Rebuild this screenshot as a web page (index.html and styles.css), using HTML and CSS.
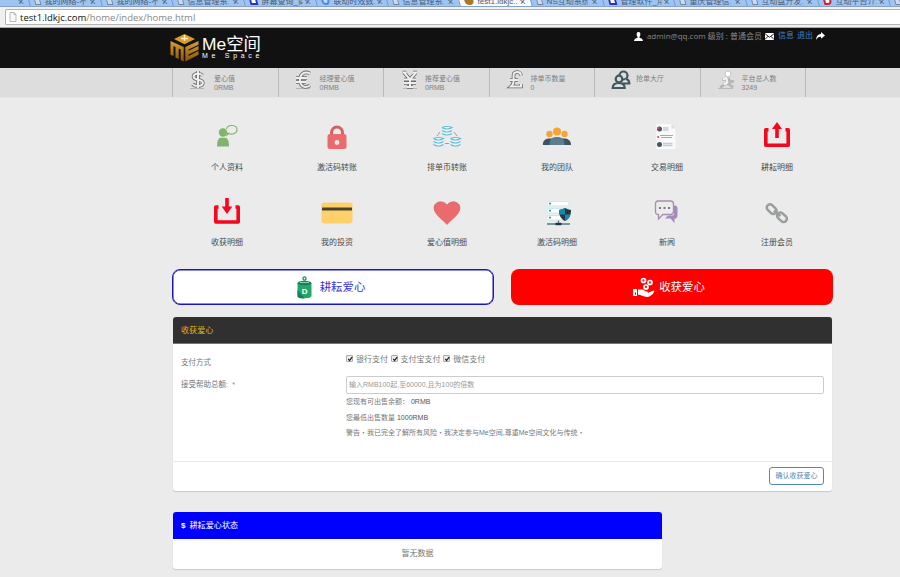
FILE: index.html
```html
<!DOCTYPE html>
<html lang="zh-CN">
<head>
<meta charset="utf-8">
<title>Me空间</title>
<link rel="stylesheet" href="styles.css">
</head>
<body>
<div class="tabs">
  <div class="tab first"><b>×</b></div>
  <div class="tab"><i></i><span>我的网络-不..</span><b>×</b></div>
  <div class="tab"><i></i><span>我的网络-不..</span><b>×</b></div>
  <div class="tab"><i></i><span>信息管理系..</span><b>×</b></div>
  <div class="tab"><i class="blue"></i><span>屏幕查询_商..</span><b>×</b></div>
  <div class="tab"><i class="ring"></i><span>联动时效数..</span><b>×</b></div>
  <div class="tab"><i></i><span>信息管理系..</span><b>×</b></div>
  <div class="tab active"><i class="gold"></i><span>test1.ldkjc..</span><b>×</b></div>
  <div class="tab"><i></i><span>NS互动系统..</span><b>×</b></div>
  <div class="tab"><i class="blue"></i><span>管理软件_用..</span><b>×</b></div>
  <div class="tab"><i></i><span>重庆管理信..</span><b>×</b></div>
  <div class="tab"><i></i><span>互动盘开发..</span><b>×</b></div>
  <div class="tab"><i class="red"></i><span>互动平台介..</span><b>×</b></div>
  <div class="tab"><i></i></div>
</div>
<div class="toolbar">
  <div class="address">
    <svg width="8" height="10" viewBox="0 0 8 10"><path d="M1 .5h4l2 2v7H1zM5 .5v2h2" fill="#f8f8f8" stroke="#aaa" stroke-width=".8"/></svg>
    <span class="url"><em>test1.ldkjc.com</em>/home/index/home.html</span>
  </div>
</div>
<header class="top">
  <div class="container top-in">
    <div class="logo">
      <svg width="29" height="28" viewBox="0 0 29 28">
        <defs><linearGradient id="g" x1="0" y1="0" x2="0" y2="1"><stop offset="0" stop-color="#d9a12c"/><stop offset="1" stop-color="#8a5207"/></linearGradient></defs>
        <path d="M14.500 0 25 5 14.500 10.200 4 5z" fill="#d99d2b"/><path d="M14.500 1v6M11 4.500h7" stroke="#fff3b5" stroke-width="1.400"/>
        <path d="M.5 7 13.700 13V27.500l-3-1.500V15.500l-2-1v10.500l-3.200-1.600V13l-2-.9v10L.5 20.800z" fill="url(#g)"/>
        <path d="M28.500 7v3.800l-10 4.800v1.200l10-4.800v3.800l-10 4.800v1.400l10-5v3.800L15.300 27.500V13z" fill="url(#g)"/>
      </svg>
      <div class="logo-text"><strong>Me空间</strong><small>Me Space</small></div>
    </div>
    <div class="account">
      <svg width="9" height="9" viewBox="0 0 9 9"><path d="M4.500 0C2.800 0 2.500 1.200 2.700 3c.1 1 .5 1.700.9 2v.8C1.500 6.500.3 7 0 9h9C8.700 7 7.500 6.500 5.400 5.800V5c.4-.3.800-1 .9-2C6.500 1.200 6.200 0 4.500 0z" fill="#fff"/></svg>
      <span class="who">admin@qq.com 级别 : 普通会员</span>
      <svg width="9" height="7" viewBox="0 0 9 7"><path d="M0 0h9v7H0z" fill="#fff"/><path d="m0 .7 4.500 3.600L9 .7M0 6.500l3-3.300M9 6.500 6 3.200" fill="none" stroke="#111" stroke-width=".9"/></svg>
      <a>信息</a><a>退出</a>
      <svg width="9" height="8" viewBox="0 0 9 8"><path d="M5 0l4 3.400-4 3.400V4.800C2.800 4.600 1.300 5.600.3 8 0 4.700 1.700 2.300 5 2z" fill="#fff"/></svg>
    </div>
  </div>
</header>
<div class="stats">
  <div class="container stats-in">
    <div class="stat"><svg width="20" height="20" viewBox="0 0 20 20"><path class="sh" d="M1 18.500h14"/><path class="o" d="M13.500 5.500C11 3 4.500 3 4.500 6.800c0 4 9.300 1.800 9.300 6 0 4-7.500 4-10.300 1.300M9 1v17"/><path class="w" d="M13.500 5.500C11 3 4.500 3 4.500 6.800c0 4 9.300 1.800 9.300 6 0 4-7.500 4-10.300 1.300M9 1v17"/></svg><p>爱心值<br>0RMB</p></div>
    <div class="stat"><svg width="20" height="20" viewBox="2 0 20 20"><path class="sh" d="M3 18.500h14"/><path class="o" d="M17 3.500C12 .8 7 3.500 7 10s5 8.500 10 5.500M3 8h11M3 12h10"/><path class="w" d="M17 3.500C12 .8 7 3.500 7 10s5 8.500 10 5.500M3 8h11M3 12h10"/></svg><p>经理爱心值<br>0RMB</p></div>
    <div class="stat"><svg width="20" height="20" viewBox="0 0 20 20"><path class="sh" d="M3 18.500h14"/><path class="o" d="M2.500 2.500h4M13 2.500h4M4.500 3 10 9.500 15.500 3M10 9v8M4 9.500h12M4 13h12M7 17h6"/><path class="w" d="M2.500 2.500h4M13 2.500h4M4.500 3 10 9.500 15.500 3M10 9v8M4 9.500h12M4 13h12M7 17h6"/></svg><p>推荐爱心值<br>0RMB</p></div>
    <div class="stat"><svg width="20" height="20" viewBox="0 0 20 20"><path class="o" d="M15 5.500C14.500 .7 7.500 1 7.500 6c0 4 1.500 7-2.500 10.500h10V14M4 10h8"/><path class="w" d="M15 5.500C14.500 .7 7.500 1 7.500 6c0 4 1.500 7-2.500 10.500h10V14M4 10h8"/></svg><p>排单币数量<br>0</p></div>
    <div class="stat"><svg width="20" height="20" viewBox="0 0 20 20" fill="#ddd" stroke="#3e5760" stroke-width="2.200"><circle cx="12.500" cy="5.500" r="4"/><path d="M11 13.500h7.300c0-2.500-1-4-3.300-4.500"/><circle cx="8" cy="9" r="3.300"/><path d="M1.700 18c0-3.500 2-5 6-5s6 1.500 6 5z"/></svg><p>抢单大厅</p></div>
    <div class="stat"><svg width="20" height="20" viewBox="0 0 20 20"><path d="M1 18.500h15" stroke="#bbb"/><circle cx="11" cy="4" r="3" fill="#fff" stroke="#c4c4c4"/><path d="M10 8.500 5.500 10M11 8l2.500 4 3.500-1M10 9v4l-3 2-4 2.500M10 13l3 2 3 2.500" fill="none" stroke="#b5b5b5" stroke-width="2.600"/><path d="m10 8-4 1.500M10 9v4l-3 1.500" fill="none" stroke="#fff" stroke-width="1.600"/></svg><p>平台总人数<br>3249</p></div>
  </div>
</div>
<main class="container">
  <nav class="menu">
    <a><svg width="30" height="30" viewBox="0 0 30 30"><g fill="#82b46e"><circle cx="11" cy="11.500" r="4.200"/><path d="M5 25.500c0-5 1-8.300 3.500-8.800h5C16 17.200 17 20.500 17 25.500z"/></g><path d="M14.500 8c1-5 10.500-4.500 10.500.5 0 4-5 5.500-8 4l-2 1.500.8-2.700" fill="none" stroke="#82b46e" stroke-width="1.100"/></svg>个人资料</a>
    <a><svg width="30" height="30" viewBox="0 0 30 30"><path d="M9.500 15v-3c0-8 11-8 11 0v3" fill="none" stroke="#d95e61" stroke-width="3"/><rect x="5.500" y="13" width="19" height="15" rx="2.500" fill="#eb6a6d"/><circle cx="15" cy="21.500" r="2.400" fill="#f5e8e8"/></svg>激活码转账</a>
    <a><svg width="30" height="30" viewBox="0 0 30 30"><g fill="#fff" stroke="#5bbdd8" stroke-width="1.200"><path d="M10 6.500q5-2 10 0-5 3-10 0M10 9.500q5 3 10 0M10 12.500q5 3 10 0M1.500 17.500q5-2 10 0-5 3-10 0M1.500 20.500q5 3 10 0M1.500 23.500q5 3 10 0M18.500 17.500q5-2 10 0-5 3-10 0M18.500 20.500q5 3 10 0M18.500 23.500q5 3 10 0"/></g><path d="m8 11-3 4M22 11l3 4M13 22.500h4" stroke="#789" stroke-width=".8"/></svg>排单币转账</a>
    <a><svg width="30" height="30" viewBox="0 0 30 30"><g fill="#f4a535"><circle cx="7.500" cy="13" r="3.200"/><circle cx="22.500" cy="13" r="3.200"/><path d="M.8 24c0-5 3-6.500 7-6.500h14c4 0 7.200 1.500 7.200 6.500z" fill="#3d5361"/><circle cx="15" cy="10.500" r="4"/></g><path d="M7.500 24c0-5.500 2-8 7.500-8s7.500 2.500 7.500 8z" fill="#5b7e8c"/></svg>我的团队</a>
    <a><svg width="30" height="30" viewBox="0 0 30 30"><path d="M4.500 3h15l4 4.500V28h-19z" fill="#fafafa"/><path d="m19.500 3 4 4.500h-4" fill="#ddd"/><path d="M11 7h5.500M11 9h5.500M11 22.500h9.500M11 24.500h9.500" stroke="#c7cace" stroke-width="1.500"/><path d="M8 14.500h13M9 16.500h11" stroke="#dc9294"/><circle cx="7.500" cy="8" r="2.500" fill="#475560"/><path d="M7.500 8V5.500A2.500 2.500 0 0 0 5 8z" fill="#db4b4f"/><circle cx="6.200" cy="16" r="1.100" fill="#db4b4f"/><circle cx="7.500" cy="23.500" r="2.500" fill="#475560"/></svg>交易明细</a>
    <a><svg width="30" height="30" viewBox="0 0 30 30" fill="none" stroke="#f6061f" stroke-width="3.600" stroke-linejoin="round"><path d="M6.500 8.800H3.800v15.500h22.400V8.800h-2.700"/><path d="M15 17V7"/><path d="m10 8 5-7 5 7z" fill="#f6061f" stroke="none"/></svg>耕耘明细</a>
    <a><svg width="30" height="30" viewBox="0 -1 30 30" fill="none" stroke="#f6061f" stroke-width="3.600" stroke-linejoin="round"><path d="M6.500 10H3.800v15h22.400V10h-2.700"/><path d="M15 1v10"/><path d="m9.700 9.500 5.300 7.500 5.300-7.500z" fill="#f6061f" stroke="none"/></svg>收获明细</a>
    <a><svg width="30" height="30" viewBox="0 -1 30 30"><rect x="-.5" y="5.500" width="31" height="21" rx="3" fill="#fed069"/><path d="M0 10.500h30v3H0z" fill="#4a4332"/></svg>我的投资</a>
    <a><svg width="30" height="30" viewBox="0 -1 30 30"><path d="M15 27.500C12 23.500 2 17.500 2 11 2 4.500 11 2.500 15 8 19 2.500 28 4.500 28 11 28 17.500 18 23.500 15 27.500z" fill="#eb6a6d" stroke="#d45e61" stroke-width=".6"/></svg>爱心值明细</a>
    <a><svg width="30" height="30" viewBox="0 -1 30 30"><g fill="#fff" stroke="#cce9f0"><rect x="5" y="4.500" width="22" height="4.500" rx="1.500"/><rect x="5" y="11.500" width="22" height="4.500" rx="1.500"/><rect x="5" y="18.500" width="22" height="4.500" rx="1.500"/></g><path d="M7 6.700h2M7 13.700h2M7 20.700h2" stroke="#289ab8" stroke-width="1.800"/><path d="M5 27h23M16.500 23.500v3" stroke="#54798a" stroke-width="1.300"/><path d="M13.500 27h6" stroke="#234" stroke-width="2.400"/><path d="M17 13q3.500-.3 6-2 2.500 1.700 6 2c.2 5-2 9-6 11-4-2-6.200-6-6-11z" fill="#273943"/><path d="M23 11v6.500h-5.500q-.7-2-.5-4.500 3.500-.3 6-2zM23 17.500h5.500c-.9 3-2.800 5.200-5.500 6.500z" fill="#168aae"/></svg>激活码明细</a>
    <a><svg width="30" height="30" viewBox="0 -1 30 30"><path d="M22 8.500c3 0 3.500 1 3.500 3.500v6c0 2.500-1 3.500-3 3.700V26L18.500 21.500H13l3-3h4.500c1.500 0 1.500-1 1.500-2z" fill="#a58aba"/><path d="M6 4h12.500c2 0 3 1 3 3v7.500c0 2-1 3-3 3H11L6.500 22v-4.500C4 17.500 3.500 16.500 3.500 14.500V7C3.500 5 4.500 4 6 4z" fill="#ececec" stroke="#a58fae" stroke-width="1.300"/><path d="M7 11h2M11.500 11h2M16 11h2" stroke="#86708f" stroke-width="2"/></svg>新闻</a>
    <a><svg width="30" height="30" viewBox="0 -2 30 30" fill="none" stroke="#9a9e9b" stroke-width="2.500"><rect x="4.500" y="8" width="11" height="6.500" rx="3.200" transform="rotate(43 10 10.700)"/><rect x="14.500" y="16" width="11" height="6.500" rx="3.200" transform="rotate(43 20 19.200)"/><path d="m12 12.500 6.500 5.500"/></svg>注册会员</a>
  </nav>
  <div class="actions">
    <a class="btn-sow"><svg width="15" height="23" viewBox="0 0 15 23"><circle cx="7.500" cy="2.500" r="1.600" fill="none" stroke="#1e8558" stroke-width="1.200"/><path d="M.5 7v13c0 3 14 3 14 0V7z" fill="#25a567"/><path d="M.5 14v6c0 3 7 2.500 7 2.300z" fill="#15834e"/><ellipse cx="7.500" cy="7" rx="7" ry="2.200" fill="#148254"/><path d="M3 6.500h9" stroke="#8fd3af"/><text x="7.600" y="18" text-anchor="middle">D</text></svg>耕耘爱心</a>
    <a class="btn-reap"><svg width="22" height="21" viewBox="0 0 22 21"><g fill="#d33" stroke="#fff" stroke-width="1.700"><circle cx="10.500" cy="3.500" r="2"/><circle cx="17" cy="5.500" r="2"/><circle cx="13" cy="10" r="2"/></g><path d="M0 12h4v7H0z" fill="#fff"/><path d="M2 15.500h1v2H2z" fill="#236"/><path d="M5 12.500h4c2 0 2.500 2 5 2 1 0 1.500.8.500 1.500 2 0 4-2.500 6.500-2.500 1.500.5-2.500 6.500-7 6.500-3.500 0-6-2.500-9-2.500z" fill="#fff"/></svg>收获爱心</a>
  </div>
  <section class="panel reap">
    <h2>收获爱心</h2>
    <div class="form">
      <label>支付方式</label>
      <div class="checks"><i><svg viewBox="0 0 7 7"><path d="m1.500 3.300 1.500 2 3-4"/></svg></i><span>银行支付</span><i><svg viewBox="0 0 7 7"><path d="m1.500 3.300 1.500 2 3-4"/></svg></i><span>支付宝支付</span><i><svg viewBox="0 0 7 7"><path d="m1.500 3.300 1.500 2 3-4"/></svg></i><span>微信支付</span></div>
      <label>接受帮助总额: &nbsp;<em>*</em></label>
      <div class="field"><div class="input">输入RMB100起,至60000,且为100的倍数</div>
        <p>您现有可出售余额： <b>0RMB</b></p><p>您最低出售数量 <b>1000RMB</b></p><p>警告・我已完全了解所有风险・我决定参与Me空间,尊重Me空间文化与传统・</p></div>
    </div>
    <footer><a>确认收获爱心</a></footer>
  </section>
  <section class="panel sow">
    <h2><b>$</b>耕耘爱心状态</h2>
    <div class="empty">暂无数据</div>
  </section>
</main>
</body>
</html>
```
FILE: styles.css
```css
* { box-sizing: border-box; }
body { margin: 0; height: 577px; overflow: hidden; background: #ebebeb; color: #777; font: 8px/12px "Liberation Sans", "Noto Sans CJK SC", sans-serif; }
h2, p { margin: 0; font-weight: normal; }
em { font-style: normal; }
svg { display: block; flex: none; overflow: visible; }
.container { width: 661px; margin-left: 172px; }

.tabs { display: flex; height: 7px; background: #9dc4f3; border-bottom: 1px solid #85a3c9; overflow: hidden; }
.tab { display: flex; flex: none; align-items: flex-end; width: 71.7px; height: 6px; padding: 0 5px 0 5px; border-left: 1px solid #769ac6; transform: skewX(15deg); color: #4a5a70; }
.tab.first { width: 29px; border: 0; }
.tab.active { background: #fafafa; }
.tab i { flex: none; width: 6px; height: 9px; margin: 0 4px 1px 0; border: 1px solid #75859b; background: #c8dcf5; }
.tab i.blue { width: 8px; background: #fff; border: 2px solid #2634c8; }
.tab i.ring { width: 8px; border: 2px solid #4a8de0; border-radius: 50%; }
.tab i.gold { width: 9px; border: 0; border-radius: 50%; background: #aa7529; }
.tab i.red { width: 8px; border: 2px solid #cf2436; border-radius: 0 5px 5px 0; background: #fff; }
.tab span { width: 41px; font-size: 8px; line-height: 9px; white-space: nowrap; overflow: hidden; flex: none; transform: skewX(-15deg); }
.tab b { margin-left: auto; font-size: 10px; line-height: 8px; font-weight: normal; }

.toolbar { height: 21px; padding: 2px 0 3px 5px; background: #f0f0f0; border-bottom: 1px solid #aaa; }
.address { display: flex; align-items: center; gap: 3px; height: 16px; padding-left: 3px; background: #fff; border: 1px solid #b3b3b3; border-right: 0; border-radius: 2px 0 0 2px; }
.url { font: 9.5px/14px "Open Sans", sans-serif; color: #888; padding-top: 1px; }
.url em { color: #111; }

.top { height: 40px; background: #111; }
.top-in { display: flex; justify-content: space-between; height: 40px; }
.logo { display: flex; gap: 3px; margin: 6px 0 0 -2px; }
.logo-text { display: flex; flex-direction: column; color: #fff; padding-top: 2px; }
.logo-text strong { font: 17.4px/17px "Liberation Sans", "Noto Sans CJK SC", sans-serif; white-space: nowrap; }
.logo-text small { font-size: 7px; line-height: 6px; letter-spacing: 3.7px; white-space: nowrap; }
.account { display: flex; align-items: center; height: 14px; margin: 1px 8px 0 0; gap: 3px; color: #888; }
.account .who { font: 8px/14px "Open Sans", "Noto Sans CJK SC", sans-serif; white-space: nowrap; margin-left: 1px; }
.account a { color: #3d83c9; line-height: 14px; }
.account a:first-of-type { margin-left: 1px; }

.stats { height: 30px; background: #ddd; border-bottom: 1px solid #e6e6e6; }
.stats-in { display: flex; }
.stat { display: flex; flex: none; gap: 5px; width: 105.5px; height: 29px; padding: 2px 0 0 16px; border-left: 1px solid #b9b9b9; white-space: nowrap; }
.stat:last-child { width: 106.500px; border-right: 1px solid #b9b9b9; }
.stat p { padding-top: 4px; font-size: 7px; line-height: 9px; color: #808080; }
.stat .o { fill: none; stroke: #6a6a6a; stroke-width: 3.6; }
.stat .w { fill: none; stroke: #eee; stroke-width: 2; }
.stat .sh { stroke: #b5b5b5; stroke-width: 1; }

.menu { display: grid; grid-template-columns: repeat(6, 110px); grid-auto-rows: 75px; height: 172px; padding-top: 23px; }
.menu a { display: flex; flex-direction: column; align-items: center; color: #4a4a4a; line-height: 12px; }
.menu svg { margin-bottom: 11px; }

.actions { display: flex; justify-content: space-between; margin-top: -1px; }
.actions a { display: flex; align-items: center; justify-content: center; width: 322px; height: 36px; padding-right: 4px; border-radius: 8px; font-size: 11.4px; }
.btn-sow { gap: 8px; background: #fff; border: 1px solid #1717c8; box-shadow: inset 0 0 0 .5px #1717c8; color: #3535dc; }
.btn-sow text { font: bold 8px "Liberation Sans", sans-serif; fill: #fff; }
.actions .btn-reap { gap: 4px; padding-right: 6px; background: #f00; color: #fff; }

.panel { background: #fff; border-radius: 3px; box-shadow: 0 1px 1px #c9c9c9; overflow: hidden; margin-left: 1px; }
.panel h2 { padding-left: 8px; font-size: 8.1px; line-height: 27px; }
.reap { height: 174px; width: 659px; margin-top: 12px; }
.reap h2 { height: 27px; background: #303030; color: #d8b90f; border-bottom: 1px solid #777; }
.form { display: grid; grid-template-columns: 165px 478px; grid-template-rows: 22px 84px; height: 117px; padding: 10px 8px 0; }
.form label { font-size: 7.5px; padding-top: 3px; }
.form label em { color: #c08030; }
.checks { display: flex; align-items: flex-start; }
.checks i { width: 7px; height: 7px; margin: 1px 3px 0 0; border: 1px solid #aaa; border-radius: 1px; background: #eee; }
.checks svg { width: 6px; height: 6px; fill: none; stroke: #222; stroke-width: 1.5; }
.checks span { margin-right: 2.600px; }
.input { height: 18px; margin-bottom: 2px; padding-left: 2px; border: 1px solid #ccc; border-radius: 2px; color: #999; font-size: 7px; line-height: 16px; }
.field p { height: 15.7px; font-size: 7px; line-height: 12px; white-space: nowrap; }
.field b { font-weight: normal; color: #555; }
.reap footer { display: flex; justify-content: flex-end; height: 30px; padding: 5px 8px 0; border-top: 1px solid #e8e8e8; }
.reap footer a { width: 55px; height: 18px; border: 1px solid #5585b5; border-radius: 3px; color: #5585b5; font-size: 7px; line-height: 16px; text-align: center; }
.sow { width: 489px; height: 57px; margin-top: 21px; }
.sow h2 { height: 27px; background: #00f; color: #fff; }
.sow h2 b { margin-right: 4px; }
.empty { line-height: 29px; text-align: center; }
```
